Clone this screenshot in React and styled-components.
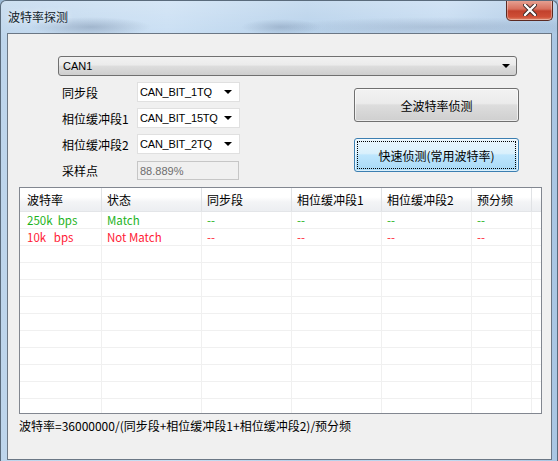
import React from "react";
import styled, { createGlobalStyle } from "styled-components";

const GlobalStyle = createGlobalStyle`
  html, body { margin: 0; padding: 0; background: #9ab8d4; }
  body { font-family: "Noto Sans CJK SC", "Liberation Sans", sans-serif; }
  * { box-sizing: border-box; }
`;

const Window = styled.div`
  width: 558px;
  height: 461px;
  display: flex;
  flex-direction: column;
  border-radius: 6px 6px 0 0;
  overflow: hidden;
  border: 1px solid #5a6b7c;
  border-bottom: none;
  background:
    radial-gradient(ellipse 60px 10px at 90px 26px, rgba(90,110,140,0.35), transparent),
    radial-gradient(ellipse 40px 8px at 280px 26px, rgba(90,110,140,0.3), transparent),
    radial-gradient(ellipse 160px 10px at 440px 26px, rgba(90,110,140,0.25), transparent),
    linear-gradient(180deg, rgba(255,255,255,0.25) 0px, rgba(255,255,255,0) 40px),
    linear-gradient(90deg, #bdd5ec 0%, #c8def3 30%, #b5d0ea 55%, #c3daf1 80%, #a9c6e3 100%);
`;

const TitleBar = styled.div`
  height: 32px;
  flex: none;
  display: flex;
  justify-content: space-between;
  align-items: flex-start;
  padding-left: 7px;
  padding-right: 4px;
`;

const Title = styled.div`
  margin-top: 8px;
  font-size: 12px;
  line-height: 16px;
  color: #101c2a;
  text-shadow: 0 0 6px rgba(255,255,255,0.9);
`;

const CloseButton = styled.div`
  width: 47px;
  height: 21px;
  margin-top: -1px;
  border: 1px solid #5b2a22;
  border-top: none;
  border-radius: 0 0 5px 5px;
  background: linear-gradient(180deg, #e7a597 0%, #d7705d 45%, #c2412c 55%, #cf4f37 85%, #e08a6d 100%);
  box-shadow: inset 0 0 0 1px rgba(255,255,255,0.35);
  display: flex;
  align-items: center;
  justify-content: center;
`;

const Client = styled.div`
  flex: 1;
  margin: 0 5px 1px 6px;
  border: 1px solid #6b7785;
  background: #f0f0f0;
  display: flex;
  flex-direction: column;
  padding-top: 22px;
  font-size: 12px;
`;

const MainCombo = styled.div`
  margin-left: 50px;
  width: 459px;
  height: 20px;
  border: 1px solid #707070;
  border-radius: 3px;
  background: linear-gradient(180deg, #f2f2f2 0%, #ebebeb 45%, #dddddd 50%, #cfcfcf 100%);
  display: flex;
  align-items: center;
  justify-content: space-between;
  padding: 0 6px 0 4px;
  font-family: "Liberation Sans", "DejaVu Sans", sans-serif;
  font-size: 11px;
  color: #000;
`;

const Arrow = styled.span`
  width: 0;
  height: 0;
  border-left: 4px solid transparent;
  border-right: 4px solid transparent;
  border-top: 4px solid #000;
`;

const MiddleRow = styled.div`
  display: flex;
  margin-top: 6px;
`;

const Form = styled.div`
  margin-left: 54px;
  display: grid;
  grid-template-columns: 75px 103px;
  grid-auto-rows: 20px;
  row-gap: 6px;
`;

const Label = styled.div`
  display: flex;
  align-items: center;
  font-size: 12px;
  color: #000;
  white-space: nowrap;
`;

const Select = styled.div`
  background: #fff;
  border: 1px solid #e0e0e0;
  display: flex;
  align-items: center;
  justify-content: space-between;
  padding: 0 7px 0 2px;
  font-family: "Liberation Sans", "DejaVu Sans", sans-serif;
  font-size: 11px;
  letter-spacing: -0.2px;
  color: #000;
`;

const TextField = styled.div`
  margin-top: 1px;
  height: 19px;
  width: 102px;
  background: #f0f0f0;
  border: 1px solid #c6c6c6;
  display: flex;
  align-items: center;
  padding-left: 2px;
  font-family: "Liberation Sans", "DejaVu Sans", sans-serif;
  font-size: 11px;
  color: #6d6d6d;
`;

const Buttons = styled.div`
  margin-left: 114px;
  padding-top: 6px;
  display: flex;
  flex-direction: column;
  gap: 16px;
`;

const Button = styled.div`
  position: relative;
  width: 165px;
  height: 34px;
  border: 1px solid ${p => (p.$focused ? "#3c7fb1" : "#707070")};
  border-radius: 3px;
  background: ${p =>
    p.$focused
      ? "linear-gradient(180deg, #eaf6fd 0%, #d9f0fc 45%, #bee6fd 50%, #a7d9f5 100%)"
      : "linear-gradient(180deg, #f2f2f2 0%, #ebebeb 45%, #dddddd 50%, #cfcfcf 100%)"};
  box-shadow: inset 0 0 0 1px rgba(255,255,255,0.6);
  display: flex;
  align-items: center;
  justify-content: center;
  font-size: 12px;
  color: #000;
  &::after {
    content: "";
    display: ${p => (p.$focused ? "block" : "none")};
    position: absolute;
    inset: 2px;
    border: 1px dotted #000;
  }
`;

const Table = styled.div`
  margin: 7px 0 0 11px;
  width: 523px;
  height: 227px;
  border: 1px solid #828790;
  background: #fff;
  overflow: hidden;
`;

const HeaderRow = styled.div`
  display: flex;
  height: 24px;
  background: linear-gradient(180deg, #ffffff 0%, #ffffff 40%, #f3f4f6 60%, #eceef1 100%);
  border-bottom: 1px solid #e3e5e8;
`;

const HeaderCell = styled.div`
  flex: none;
  width: ${p => p.$w}px;
  border-right: 1px solid #e0e2e5;
  display: flex;
  align-items: center;
  padding-left: ${p => p.$pl}px;
  font-size: 12px;
  color: #000;
  white-space: nowrap;
`;

const BodyRow = styled.div`
  display: flex;
  height: 17px;
  border-bottom: 1px solid #f0f0f0;
`;

const Cell = styled.div`
  flex: none;
  width: ${p => p.$w}px;
  border-right: 1px solid #f0f0f0;
  display: flex;
  align-items: center;
  padding-left: ${p => p.$pl}px;
  font-size: 11.5px;
  font-family: "Noto Sans CJK SC", "Liberation Sans", sans-serif;
  color: ${p => p.$color || "#000"};
  white-space: pre;
  line-height: 16px;
`;

const Formula = styled.div`
  margin: 4px 0 0 11px;
  font-size: 12px;
  line-height: 16px;
  color: #000;
  white-space: nowrap;
`;

const columns = [
  { w: 82, pl: 7, title: "波特率" },
  { w: 100, pl: 5, title: "状态" },
  { w: 90, pl: 5, title: "同步段" },
  { w: 90, pl: 5, title: "相位缓冲段1" },
  { w: 90, pl: 5, title: "相位缓冲段2" },
  { w: 60, pl: 5, title: "预分频" },
  { w: 20, pl: 0, title: "" },
];

const GREEN = "#1db31d";
const RED = "#ff1a35";

const rows = [
  { color: GREEN, cells: ["250k  bps", "Match", "--", "--", "--", "--", ""] },
  { color: RED, cells: ["10k   bps", "Not Match", "--", "--", "--", "--", ""] },
];

const emptyRows = Array.from({ length: 10 });

export default function App() {
  return (
    <>
      <GlobalStyle />
      <Window>
        <TitleBar>
          <Title>波特率探测</Title>
          <CloseButton>
            <svg width="14" height="12" viewBox="0 0 14 12">
              <path
                d="M2 1 L12 11 M12 1 L2 11"
                stroke="#3a2a2a"
                strokeWidth="4.2"
                strokeLinecap="round"
              />
              <path
                d="M2 1 L12 11 M12 1 L2 11"
                stroke="#ffffff"
                strokeWidth="2.4"
                strokeLinecap="round"
              />
            </svg>
          </CloseButton>
        </TitleBar>
        <Client>
          <MainCombo>
            <span>CAN1</span>
            <Arrow />
          </MainCombo>
          <MiddleRow>
            <Form>
              <Label>同步段</Label>
              <Select>
                <span>CAN_BIT_1TQ</span>
                <Arrow />
              </Select>
              <Label>相位缓冲段1</Label>
              <Select>
                <span>CAN_BIT_15TQ</span>
                <Arrow />
              </Select>
              <Label>相位缓冲段2</Label>
              <Select>
                <span>CAN_BIT_2TQ</span>
                <Arrow />
              </Select>
              <Label>采样点</Label>
              <TextField>88.889%</TextField>
            </Form>
            <Buttons>
              <Button>全波特率侦测</Button>
              <Button $focused>快速侦测(常用波特率)</Button>
            </Buttons>
          </MiddleRow>
          <Table>
            <HeaderRow>
              {columns.map((c, i) => (
                <HeaderCell key={i} $w={c.w} $pl={c.pl}>
                  {c.title}
                </HeaderCell>
              ))}
            </HeaderRow>
            {rows.map((r, ri) => (
              <BodyRow key={ri}>
                {columns.map((c, i) => (
                  <Cell key={i} $w={c.w} $pl={c.pl} $color={r.color}>
                    {r.cells[i]}
                  </Cell>
                ))}
              </BodyRow>
            ))}
            {emptyRows.map((_, ri) => (
              <BodyRow key={"e" + ri}>
                {columns.map((c, i) => (
                  <Cell key={i} $w={c.w} $pl={c.pl} />
                ))}
              </BodyRow>
            ))}
          </Table>
          <Formula>波特率=36000000/(同步段+相位缓冲段1+相位缓冲段2)/预分频</Formula>
        </Client>
      </Window>
    </>
  );
}
